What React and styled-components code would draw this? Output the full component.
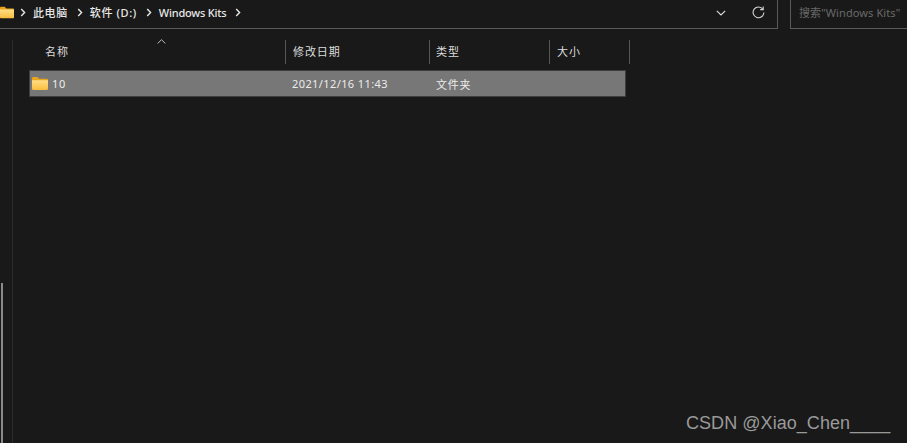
import React from "react";
import styled, { createGlobalStyle } from "styled-components";

const GlobalStyle = createGlobalStyle`
  html, body {
    margin: 0;
    padding: 0;
    background: #191919;
    overflow: hidden;
  }
`;

const columns = "257px 144px 120px 80px";
const fontStack = `"Noto Sans", "Noto Sans CJK SC", sans-serif`;

function FolderIcon({ width, height }) {
  return (
    <svg width={width} height={height} viewBox="0 0 16 13">
      <path d="M0 1.2C0 .5.5 0 1.2 0h4.2l1.8 1.8h7.6c.7 0 1.2.5 1.2 1.2v1H0z" fill="#e8a51c" />
      <path d="M0 3.2h16v8.6c0 .7-.5 1.2-1.2 1.2H1.2C.5 13 0 12.5 0 11.8z" fill="url(#folderFill)" />
      <defs>
        <linearGradient id="folderFill" x1="0" y1="0" x2="0" y2="1">
          <stop offset="0" stopColor="#ffdf85" />
          <stop offset="1" stopColor="#f8bd3e" />
        </linearGradient>
      </defs>
    </svg>
  );
}

function Chevron() {
  return (
    <svg width="6" height="9" viewBox="0 0 6 9">
      <path d="M1.2 1 4.6 4.5 1.2 8" fill="none" stroke="#e6e6e6" strokeWidth="1.4" />
    </svg>
  );
}

export default function App() {
  return (
    <Page>
      <GlobalStyle />
      <TopBar>
        <AddressBar>
          <Crumbs>
            <CrumbFolder>
              <FolderIcon width={14} height={13} />
            </CrumbFolder>
            <Chevron />
            <Crumb $spacing={0.6}>此电脑</Crumb>
            <Chevron />
            <Crumb $spacing={0.6}>软件 (D:)</Crumb>
            <Chevron />
            <Crumb $spacing={-0.2} $left={7}>Windows Kits</Crumb>
            <Chevron />
          </Crumbs>
          <AddressTools>
            <svg width="10" height="6" viewBox="0 0 10 6">
              <path d="M.8.8 5 5 9.2.8" fill="none" stroke="#e0e0e0" strokeWidth="1.1" />
            </svg>
            <svg width="13" height="13" viewBox="0 0 13 13">
              <path d="M10.9 3.2A5.4 5.4 0 1 0 11.9 6.5" fill="none" stroke="#d8d8d8" strokeWidth="1.1" />
              <path d="M11.2.6v3H8.2" fill="none" stroke="#d8d8d8" strokeWidth="1.1" />
            </svg>
          </AddressTools>
        </AddressBar>
        <SearchBox>搜索"Windows Kits"</SearchBox>
      </TopBar>
      <Body>
        <Rail>
          <Thumb />
        </Rail>
        <Main>
          <HeaderRow>
            <SortMark>
              <svg width="9" height="5" viewBox="0 0 9 5">
                <path d="M.6 4.5 4.5.7 8.4 4.5" fill="none" stroke="#bdbdbd" strokeWidth="1" />
              </svg>
            </SortMark>
            <HeaderCell $pad={16}>名称</HeaderCell>
            <HeaderCell>修改日期</HeaderCell>
            <HeaderCell $pad={6}>类型</HeaderCell>
            <HeaderCell>大小</HeaderCell>
          </HeaderRow>
          <FileRow>
            <NameCell>
              <FolderIcon width={16} height={13} />
              <span>10</span>
            </NameCell>
            <DateCell>2021/12/16 11:43</DateCell>
            <TypeCell>文件夹</TypeCell>
          </FileRow>
        </Main>
      </Body>
      <Watermark>CSDN @Xiao_Chen____</Watermark>
    </Page>
  );
}

const Page = styled.div`
  position: relative;
  display: flex;
  flex-direction: column;
  width: 907px;
  height: 443px;
  background: #191919;
  font-family: ${fontStack};
  overflow: hidden;
`;

const TopBar = styled.div`
  display: flex;
  height: 29px;
  flex-shrink: 0;
`;

const AddressBar = styled.div`
  display: flex;
  align-items: center;
  justify-content: space-between;
  width: 778px;
  box-sizing: border-box;
  border-right: 1px solid #5a5a5a;
  border-bottom: 1px solid #5a5a5a;
  padding-right: 12px;
`;

const Crumbs = styled.div`
  display: flex;
  align-items: center;
  height: 24px;
  margin-top: -4px;
`;

const CrumbFolder = styled.div`
  display: flex;
  width: 20px;
`;

const Crumb = styled.span`
  font-size: 11px;
  font-weight: 500;
  letter-spacing: ${(p) => p.$spacing}px;
  color: #e8e8e8;
  margin: 0 9px 0 ${(p) => p.$left || 7}px;
  white-space: nowrap;
`;

const AddressTools = styled.div`
  display: flex;
  align-items: center;
  gap: 26px;
  margin-top: -3px;
`;

const SearchBox = styled.div`
  display: flex;
  align-items: center;
  width: 117px;
  margin-left: 12px;
  box-sizing: border-box;
  border-left: 1px solid #5a5a5a;
  border-bottom: 1px solid #5a5a5a;
  padding: 0 0 4px 8px;
  font-size: 11px;
  letter-spacing: 0.1px;
  color: #6a6a6a;
  white-space: nowrap;
`;

const Body = styled.div`
  display: flex;
  flex: 1;
  min-height: 0;
  padding-top: 11px;
`;

const Rail = styled.div`
  display: flex;
  flex-direction: column;
  justify-content: flex-end;
  width: 13px;
  box-sizing: border-box;
  border-right: 1px solid #2c2c2c;
  padding-left: 1px;
  flex-shrink: 0;
`;

const Thumb = styled.div`
  width: 2px;
  height: 160px;
  background: #8a8a8a;
`;

const Main = styled.div`
  display: flex;
  flex-direction: column;
  padding-left: 16px;
`;

const HeaderRow = styled.div`
  position: relative;
  display: grid;
  grid-template-columns: ${columns};
  height: 24px;
  margin-bottom: 6px;
`;

const SortMark = styled.div`
  position: absolute;
  left: 128px;
  top: -1px;
  display: flex;
`;

const HeaderCell = styled.div`
  display: flex;
  align-items: center;
  box-sizing: border-box;
  padding-left: ${(p) => p.$pad || 7}px;
  padding-bottom: 2px;
  border-right: 1px solid #555;
  font-size: 11px;
  letter-spacing: 0.9px;
  color: #dcdcdc;
  white-space: nowrap;
`;

const FileRow = styled.div`
  display: grid;
  grid-template-columns: 256px 144px auto;
  align-items: center;
  width: 597px;
  height: 27px;
  box-sizing: border-box;
  background: #777777;
  border: 1px solid #3e3e3e;
  color: #ececec;
  font-size: 11px;
`;

const NameCell = styled.div`
  display: flex;
  align-items: center;
  gap: 4px;
  padding-left: 2px;
  letter-spacing: 0.6px;
`;

const DateCell = styled.div`
  padding-left: 6px;
  letter-spacing: 0.4px;
`;

const TypeCell = styled.div`
  padding-left: 6px;
  letter-spacing: 0.7px;
`;

const Watermark = styled.div`
  position: absolute;
  left: 686px;
  top: 410px;
  font-family: "Liberation Sans", Arial, sans-serif;
  font-size: 18px;
  letter-spacing: 0.05px;
  line-height: 26px;
  color: #9a9a9a;
  white-space: nowrap;
`;
